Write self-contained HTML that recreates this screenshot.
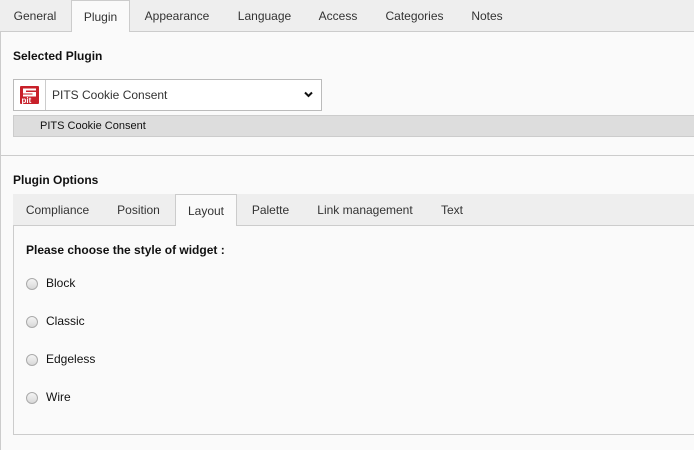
<!DOCTYPE html>
<html><head><style>
*{margin:0;padding:0;box-sizing:border-box}
body{width:694px;height:450px;overflow:hidden;background:#fafafa;font-family:"Liberation Sans",sans-serif;font-size:12px;color:#333;position:relative}
.abs{position:absolute}
.tabbar{left:0;top:0;width:694px;height:32px;background:#eee;border-bottom:1px solid #ccc}
.tab{position:absolute;top:0;height:32px;line-height:32px;text-align:center;color:#333}
.tab.act{background:#fafafa;border:1px solid #ccc;border-bottom:none;height:32px;top:0}
.b{font-weight:bold;color:#111}
.radio{position:absolute;left:26px;width:12px;height:12px;border-radius:50%;border:1px solid #aaa;background:linear-gradient(#f4f4f4,#d8d8d8)}
.rl{position:absolute;left:46px;color:#111}
</style></head><body>
<div class="abs" style="left:0;top:31px;width:1px;height:419px;background:#ccc"></div>
<div class="abs tabbar"></div>
<div class="tab" style="left:0;width:70px">General</div>
<div class="tab act" style="left:71px;width:59px">Plugin</div>
<div class="tab" style="left:130px;width:94px">Appearance</div>
<div class="tab" style="left:224px;width:81px">Language</div>
<div class="tab" style="left:305px;width:66px">Access</div>
<div class="tab" style="left:371px;width:87px">Categories</div>
<div class="tab" style="left:458px;width:58px">Notes</div>

<div class="abs b" style="left:13px;top:49px">Selected Plugin</div>
<div class="abs" style="left:13px;top:79px;width:309px;height:32px;border:1px solid #bbb;background:#fff"></div>
<div class="abs" style="left:45px;top:80px;width:1px;height:30px;background:#ccc"></div>
<svg class="abs" style="left:20px;top:86px" width="19" height="18" viewBox="0 0 19 18"><rect width="19" height="18" rx="1" fill="#c8202a"/><path d="M3 2.5h13v2H6v1.5h10v4.5H3V8.5h9.5V7.5H3z" fill="#fff"/><text x="1.5" y="17" font-size="8" font-family="Liberation Sans" font-weight="bold" fill="#fff">pit</text></svg>
<div class="abs" style="left:52px;top:88px;font-size:12px;color:#333">PITS Cookie Consent</div>
<svg class="abs" style="left:304px;top:91px" width="9" height="7" viewBox="0 0 9 7"><path d="M1 1.5l3.5 3.5 3.5-3.5" stroke="#111" stroke-width="2" fill="none"/></svg>
<div class="abs" style="left:13px;top:115px;width:700px;height:22px;background:#ddd;border:1px solid #ccc"></div>
<div class="abs" style="left:40px;top:120px;font-size:11px;color:#111">PITS Cookie Consent</div>

<div class="abs" style="left:0;top:155px;width:694px;height:1px;background:#ccc"></div>
<div class="abs b" style="left:13px;top:173px">Plugin Options</div>
<div class="abs" style="left:13px;top:194px;width:700px;height:32px;background:#eee;border-bottom:1px solid #ccc"></div>
<div class="abs" style="left:13px;top:225px;width:700px;height:210px;border:1px solid #ccc;border-top:none"></div>
<div class="tab" style="left:13px;top:194px;width:89px">Compliance</div>
<div class="tab" style="left:102px;top:194px;width:73px">Position</div>
<div class="tab act" style="left:175px;top:194px;width:62px">Layout</div>
<div class="tab" style="left:237px;top:194px;width:67px">Palette</div>
<div class="tab" style="left:304px;top:194px;width:122px">Link management</div>
<div class="tab" style="left:426px;top:194px;width:52px">Text</div>

<div class="abs b" style="left:26px;top:243px">Please choose the style of widget :</div>
<div class="radio" style="top:278px"></div><div class="rl" style="top:276px">Block</div>
<div class="radio" style="top:316px"></div><div class="rl" style="top:314px">Classic</div>
<div class="radio" style="top:354px"></div><div class="rl" style="top:352px">Edgeless</div>
<div class="radio" style="top:392px"></div><div class="rl" style="top:390px">Wire</div>
</body></html>
